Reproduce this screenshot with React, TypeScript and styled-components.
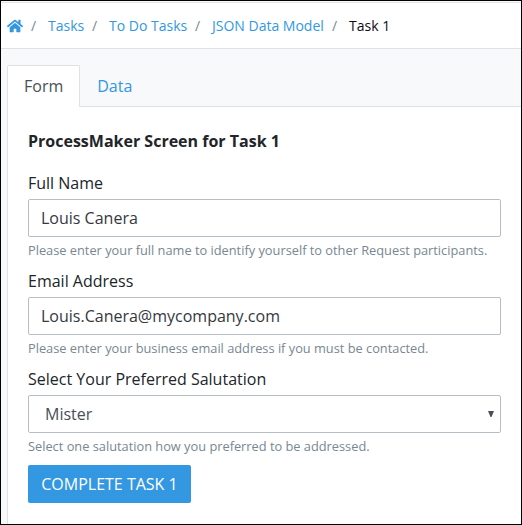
import React from 'react';
import styled, { createGlobalStyle } from 'styled-components';
import { FaHome } from 'react-icons/fa';

const GlobalStyle = createGlobalStyle`
  *, *::before, *::after { box-sizing: border-box; }
  body {
    margin: 0;
    background: #fff;
    font-family: 'Open Sans', sans-serif;
    font-size: 16px;
    line-height: 24px;
    color: #212529;
  }
`;

const Page = styled.div`
  display: flex;
  flex-direction: column;
  width: 522px;
  height: 525px;
  border: 1px solid #000;
  background: #f7f9fb;
  overflow: hidden;
`;

const Breadcrumb = styled.nav`
  display: flex;
  align-items: center;
  flex: none;
  height: 47px;
  margin-top: 1px;
  padding: 0 0 0 6px;
  border-top: 1px solid #e3e5e8;
  border-bottom: 1px solid #dee2e6;
  background: #fff;
  font-size: 14px;
  white-space: nowrap;
`;

const Crumb = styled.a<{ $width?: number; $current?: boolean }>`
  display: flex;
  flex: none;
  width: ${({ $width }) => ($width ? `${$width}px` : 'auto')};
  color: ${({ $current }) => ($current ? '#0b0b14' : '#3397e1')};
  text-decoration: none;
`;

const Separator = styled.span`
  flex: none;
  width: 25px;
  padding-left: 8px;
  color: #788793;
`;

const TabBar = styled.div`
  display: flex;
  flex: none;
  height: 58px;
  margin-left: 6px;
  padding-top: 16px;
  box-shadow: inset 0 -1px #dee2e6;
`;

const Tab = styled.button<{ $active?: boolean }>`
  height: 42px;
  padding: 0 16px 2px;
  border: 1px solid ${({ $active }) => ($active ? '#dee2e6' : 'transparent')};
  border-bottom: 0;
  border-radius: 2px 2px 0 0;
  background: ${({ $active }) => ($active ? '#fff' : 'transparent')};
  color: ${({ $active }) => ($active ? '#495057' : '#3397e1')};
  font: inherit;
`;

const Panel = styled.form`
  flex: 1;
  margin-left: 6px;
  padding: 22px 20px 0;
  border-left: 1px solid #dee2e6;
  background: #fff;
`;

const Heading = styled.h1`
  margin: 0 0 18px;
  font-size: 16px;
  line-height: 24px;
  font-weight: 700;
`;

const Field = styled.div`
  height: 98px;
`;

const Label = styled.label`
  display: block;
  margin-bottom: 4px;
`;

const Input = styled.input`
  display: block;
  width: 473px;
  height: 38px;
  padding: 0 12px;
  border: 1px solid #b6bfc6;
  border-radius: 2px;
  outline: 0;
  background: #fff;
  color: #35393e;
  font: inherit;
`;

const Select = styled.button`
  display: flex;
  align-items: center;
  justify-content: space-between;
  width: 473px;
  height: 38px;
  padding: 0 6px 0 16px;
  border: 1px solid #b6bfc6;
  border-radius: 2px;
  background: #fff;
  color: #495057;
  font: inherit;
`;

const Help = styled.small`
  display: block;
  margin-top: 4px;
  font-size: 12.8px;
  line-height: 19px;
  color: #788793;
  white-space: nowrap;
`;

const SubmitButton = styled.button`
  display: block;
  width: 163px;
  height: 38px;
  padding: 0;
  border: 0;
  border-radius: 2px;
  background: #3397e1;
  color: #fff;
  font: inherit;
  white-space: nowrap;
`;

export default function App() {
  return (
    <>
      <GlobalStyle />
      <Page>
        <Breadcrumb>
          <Crumb $width={16}><FaHome size={16} /></Crumb>
          <Separator>/</Separator>
          <Crumb $width={36}>Tasks</Crumb>
          <Separator>/</Separator>
          <Crumb $width={78}>To Do Tasks</Crumb>
          <Separator>/</Separator>
          <Crumb $width={112}>JSON Data Model</Crumb>
          <Separator>/</Separator>
          <Crumb $current>Task 1</Crumb>
        </Breadcrumb>
        <TabBar>
          <Tab $active>Form</Tab>
          <Tab>Data</Tab>
        </TabBar>
        <Panel onSubmit={(event) => event.preventDefault()}>
          <Heading>ProcessMaker Screen for Task 1</Heading>
          <Field>
            <Label htmlFor="name">Full Name</Label>
            <Input id="name" defaultValue="Louis Canera" />
            <Help>Please enter your full name to identify yourself to other Request participants.</Help>
          </Field>
          <Field>
            <Label htmlFor="email">Email Address</Label>
            <Input id="email" defaultValue="Louis.Canera@mycompany.com" />
            <Help>Please enter your business email address if you must be contacted.</Help>
          </Field>
          <Field>
            <Label htmlFor="salutation">Select Your Preferred Salutation</Label>
            <Select id="salutation" type="button">
              Mister
              <svg width="6" height="6" viewBox="0 0 6 6">
                <path d="M0 0h6L3.5 6h-1z" fill="#495057" />
              </svg>
            </Select>
            <Help>Select one salutation how you preferred to be addressed.</Help>
          </Field>
          <SubmitButton type="submit">COMPLETE TASK 1</SubmitButton>
        </Panel>
      </Page>
    </>
  );
}
